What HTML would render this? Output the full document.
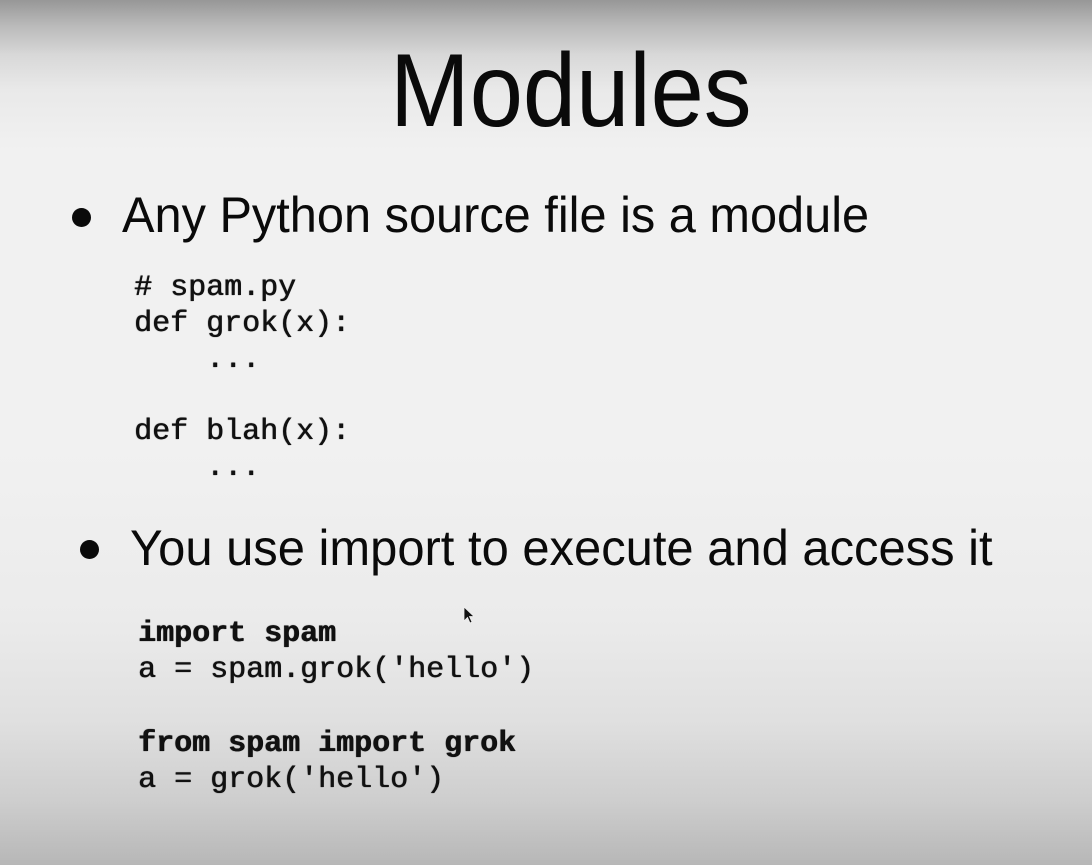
<!DOCTYPE html>
<html><head><meta charset="utf-8"><style>
html,body{margin:0;padding:0}
body{width:1092px;height:865px;overflow:hidden;position:relative;
background:linear-gradient(to bottom,#979797 0px,#b9b9b9 25px,#d8d8d8 55px,#e9e9e9 90px,#f1f1f1 150px,#f1f1f1 450px,#ebebeb 620px,#e0e0e0 720px,#cecece 800px,#b7b7b7 865px);
font-family:"Liberation Sans",sans-serif;color:#0a0a0a}
.t{position:absolute;white-space:nowrap;transform-origin:0 0}
.c{position:absolute;white-space:nowrap;font-family:"Liberation Mono",monospace;font-size:30px;line-height:36px;color:#111;text-shadow:0 0 1px rgba(0,0,0,.7),0.5px 0 0 #111}
.b{font-weight:bold}
.dot{position:absolute;width:19px;height:19px;border-radius:50%;background:#0a0a0a}
</style></head><body>
<div class="t" style="left:390px;top:31px;font-size:104px;line-height:120px;transform:scaleX(0.92)">Modules</div>
<div class="dot" style="left:72px;top:208px"></div>
<div class="t" style="left:122px;top:185px;font-size:50px;line-height:60px;transform:scaleX(0.974)">Any Python source file is a module</div>
<div class="c" style="left:134px;top:270px">#&nbsp;spam.py</div>
<div class="c" style="left:134px;top:306px">def grok(x):</div>
<div class="c" style="left:134px;top:342px">&nbsp;&nbsp;&nbsp;&nbsp;...</div>
<div class="c" style="left:134px;top:414px">def blah(x):</div>
<div class="c" style="left:134px;top:450px">&nbsp;&nbsp;&nbsp;&nbsp;...</div>
<div class="dot" style="left:80px;top:540px"></div>
<div class="t" style="left:130px;top:518px;font-size:50px;line-height:60px;transform:scaleX(0.978)">You use import to execute and access it</div>
<div class="c b" style="left:138px;top:616px">import spam</div>
<div class="c" style="left:138px;top:652px">a = spam.grok('hello')</div>
<div class="c b" style="left:138px;top:726px">from spam import grok</div>
<div class="c" style="left:138px;top:762px">a = grok('hello')</div>
<svg style="position:absolute;left:463px;top:606px" width="14" height="20" viewBox="0 0 14 20"><path d="M1 1 L1 15 L4.5 11.5 L7 17 L9 16 L6.5 10.5 L11 10.5 Z" fill="#111" stroke="#eee" stroke-width="0.8"/></svg>
</body></html>
